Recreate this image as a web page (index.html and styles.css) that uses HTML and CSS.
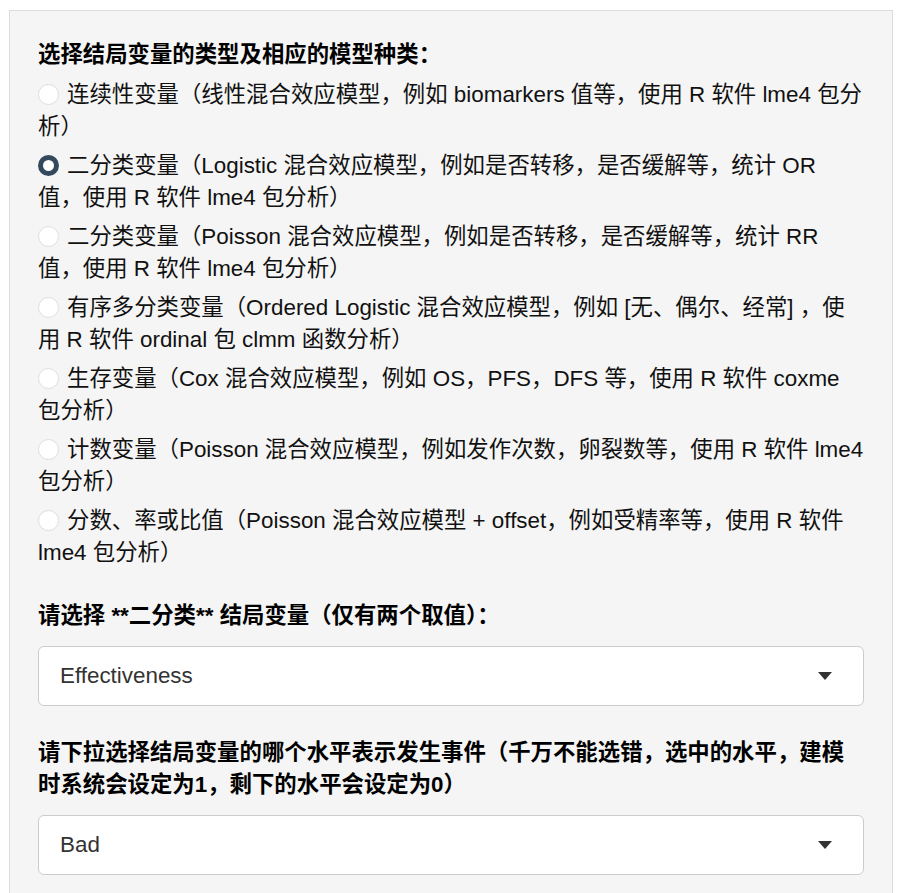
FILE: index.html
```html
<!DOCTYPE html>
<html>
<head>
  <title>模型设置</title>
  <link rel="stylesheet" href="styles.css">
</head>
<body>
  <div class="well">
    <div class="field">
      <div class="label">选择结局变量的类型及相应的模型种类：</div>
      <div class="radios">
        <label class="radio"><span class="dot"></span>连续性变量（线性混合效应模型，例如 biomarkers 值等，使用 R 软件 lme4 包分析）</label>
        <label class="radio"><span class="dot checked"></span>二分类变量（Logistic 混合效应模型，例如是否转移，是否缓解等，统计 OR 值，使用 R 软件 lme4 包分析）</label>
        <label class="radio"><span class="dot"></span>二分类变量（Poisson 混合效应模型，例如是否转移，是否缓解等，统计 RR 值，使用 R 软件 lme4 包分析）</label>
        <label class="radio"><span class="dot"></span>有序多分类变量（Ordered Logistic 混合效应模型，例如 [无、偶尔、经常] ，使用 R 软件 ordinal 包 clmm 函数分析）</label>
        <label class="radio"><span class="dot"></span>生存变量（Cox 混合效应模型，例如 OS，PFS，DFS 等，使用 R 软件 coxme 包分析）</label>
        <label class="radio"><span class="dot"></span>计数变量（Poisson 混合效应模型，例如发作次数，卵裂数等，使用 R 软件 lme4 包分析）</label>
        <label class="radio"><span class="dot"></span>分数、率或比值（Poisson 混合效应模型 + offset，例如受精率等，使用 R 软件 lme4 包分析）</label>
      </div>
    </div>

    <div class="field">
      <div class="label">请选择 **二分类** 结局变量（仅有两个取值）：</div>
      <div class="select">
        <span>Effectiveness</span>
        <svg class="caret" width="14" height="8" viewBox="0 0 14 8"><path d="M0 0h14L7 8z" fill="#333"/></svg>
      </div>
    </div>

    <div class="field">
      <div class="label">请下拉选择结局变量的哪个水平表示发生事件（千万不能选错，选中的水平，建模时系统会设定为1，剩下的水平会设定为0）</div>
      <div class="select">
        <span>Bad</span>
        <svg class="caret" width="14" height="8" viewBox="0 0 14 8"><path d="M0 0h14L7 8z" fill="#333"/></svg>
      </div>
    </div>
  </div>
</body>
</html>
```

FILE: styles.css
```css
* {
  margin: 0;
  padding: 0;
  box-sizing: border-box;
}

body {
  font-family: "Liberation Sans", "Noto Sans CJK SC", sans-serif;
  font-size: 22.4px;
  line-height: 32px;
  color: #111;
  background: #fff;
  padding: 10px 15px 0 9px;
}

.well {
  background: #f5f5f5;
  border: 1px solid #dcdcdc;
  border-bottom: none;
  padding: 28px 28px 120px 28px;
}

.field {
  margin-bottom: 31px;
}

.label {
  font-weight: bold;
  color: #000;
  margin-bottom: 14px;
}

.radios {
  display: flex;
  flex-direction: column;
  gap: 7px;
  margin-top: -6px;
}

.radio {
  display: block;
}

.dot {
  display: inline-block;
  width: 21px;
  height: 21px;
  border-radius: 50%;
  background: #fff;
  border: 1px solid #dedede;
  margin-right: 8px;
  vertical-align: -3px;
}

.dot.checked {
  border: 5px solid #34495e;
}

.select {
  display: flex;
  align-items: center;
  justify-content: space-between;
  height: 60px;
  background: #fff;
  border: 1px solid #ccc;
  border-radius: 6px;
  padding: 0 31px 0 21px;
  color: #333;
}
```
